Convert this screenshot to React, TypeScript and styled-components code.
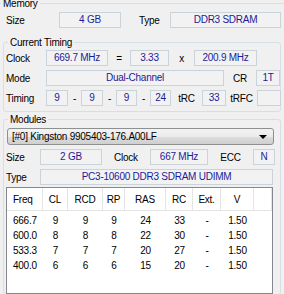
import React from "react";
import styled, { createGlobalStyle } from "styled-components";

const Global = createGlobalStyle`
  html, body { margin: 0; padding: 0; background: #f0f0f0; }
  body {
    font-family: "Liberation Sans", Arial, sans-serif;
    font-size: 10px;
    letter-spacing: -0.25px;
    color: #000;
  }
  * { box-sizing: border-box; }
`;

const Page = styled.div`
  width: 284px;
  height: 294px;
  overflow: hidden;
`;

const Group = styled.fieldset<{ $mt?: number; $ml?: number; $w?: number; $pb?: number }>`
  margin: ${(p) => p.$mt ?? 0}px 0 0 ${(p) => p.$ml ?? 0}px;
  width: ${(p) => (p.$w ? `${p.$w}px` : "auto")};
  padding: 0 0 ${(p) => p.$pb ?? 0}px 0;
  border: 1px solid #d5dfe5;
  border-radius: 3px;
  min-inline-size: 0;
`;

const OuterGroup = styled(Group)`
  margin: -3px -4px 0 -4px;
  height: 320px;
`;

const Legend = styled.legend`
  padding: 0 2px;
  margin-left: 4px;
  line-height: 13px;
  color: #000;
`;

const Row = styled.div<{ $mt?: number; $pl?: number }>`
  display: flex;
  align-items: center;
  height: 16px;
  margin-top: ${(p) => p.$mt ?? 0}px;
  padding-left: ${(p) => p.$pl ?? 0}px;
`;

const Label = styled.span<{ $w: number; $center?: boolean }>`
  flex: none;
  width: ${(p) => p.$w}px;
  text-align: ${(p) => (p.$center ? "center" : "left")};
  white-space: nowrap;
`;

const Field = styled.div<{ $w: number }>`
  flex: none;
  width: ${(p) => p.$w}px;
  height: 16px;
  border: 1px solid #cbd3da;
  background: #f2f2f2;
  color: #1c1c98;
  text-align: center;
  line-height: 14px;
  white-space: nowrap;
  overflow: hidden;
`;

const Combo = styled.div`
  display: flex;
  align-items: center;
  justify-content: space-between;
  margin: 2px 0 0 3px;
  width: 267px;
  height: 17px;
  padding: 0 6px 0 4px;
  border: 1px solid #8e8f8f;
  border-radius: 3px;
  background: linear-gradient(#f3f3f3 0%, #ebebeb 50%, #dddddd 51%, #cfcfcf 100%);
`;

const Arrow = styled.span`
  width: 0;
  height: 0;
  border-left: 4px solid transparent;
  border-right: 4px solid transparent;
  border-top: 4px solid #000;
`;

const Table = styled.div`
  margin: 2px 0 0 2px;
  width: 267px;
  height: 107px;
  background: #fff;
  border: 1px solid #828790;
`;

const Cols = "36px 25px 35px 22px 41px 27px 28px 33px 1fr";

const HeadRow = styled.div`
  display: grid;
  grid-template-columns: ${Cols};
  height: 23px;
  border-bottom: 1px solid #e5e5e5;
`;

const HeadCell = styled.div<{ $left?: boolean }>`
  display: flex;
  align-items: center;
  justify-content: ${(p) => (p.$left ? "flex-start" : "center")};
  padding-left: ${(p) => (p.$left ? "6px" : "0")};
  border-right: 1px solid #e5e5e5;
`;

const Body = styled.div`
  padding-top: 2px;
`;

const DataRow = styled.div`
  display: grid;
  grid-template-columns: ${Cols};
  height: 15px;
  align-items: center;
`;

const Cell = styled.div<{ $left?: boolean }>`
  text-align: ${(p) => (p.$left ? "left" : "center")};
  padding-left: ${(p) => (p.$left ? "6px" : "0")};
`;

const rows = [
  ["666.7", "9", "9", "9", "24", "33", "-", "1.50"],
  ["600.0", "8", "8", "8", "22", "30", "-", "1.50"],
  ["533.3", "7", "7", "7", "20", "27", "-", "1.50"],
  ["400.0", "6", "6", "6", "15", "20", "-", "1.50"],
];

const heads = ["Freq", "CL", "RCD", "RP", "RAS", "RC", "Ext.", "V", ""];

export default function App() {
  return (
    <Page>
      <Global />
      <OuterGroup>
        <Legend>Memory</Legend>
        <Row $mt={2} $pl={9}>
          <Label $w={53}>Size</Label>
          <Field $w={62}>4 GB</Field>
          <Label $w={18} />
          <Label $w={31}>Type</Label>
          <Field $w={111}>DDR3 SDRAM</Field>
        </Row>

        <Group $mt={8} $ml={6} $w={278} $pb={5}>
          <Legend>Current Timing</Legend>
          <Row $mt={1} $pl={2}>
            <Label $w={40}>Clock</Label>
            <Field $w={62}>669.7 MHz</Field>
            <Label $w={22} $center>=</Label>
            <Field $w={39}>3.33</Field>
            <Label $w={25} $center>x</Label>
            <Field $w={63}>200.9 MHz</Field>
          </Row>
          <Row $mt={4} $pl={2}>
            <Label $w={40}>Mode</Label>
            <Field $w={178}>Dual-Channel</Field>
            <Label $w={32} $center>CR</Label>
            <Field $w={24}>1T</Field>
          </Row>
          <Row $mt={4} $pl={2}>
            <Label $w={40}>Timing</Label>
            <Field $w={22}>9</Field>
            <Label $w={13} $center>-</Label>
            <Field $w={22}>9</Field>
            <Label $w={13} $center>-</Label>
            <Field $w={21}>9</Field>
            <Label $w={13} $center>-</Label>
            <Field $w={21}>24</Field>
            <Label $w={31} $center>tRC</Label>
            <Field $w={24}>33</Field>
            <Label $w={31} $center>tRFC</Label>
            <Field $w={24}></Field>
          </Row>
        </Group>

        <Group $mt={1} $ml={6} $w={278}>
          <Legend>Modules</Legend>
          <Combo>
            <span>[#0] Kingston 9905403-176.A00LF</span>
            <Arrow />
          </Combo>
          <Row $mt={4} $pl={2}>
            <Label $w={34}>Size</Label>
            <Field $w={62}>2 GB</Field>
            <Label $w={48} $center>Clock</Label>
            <Field $w={58}>667 MHz</Field>
            <Label $w={45} $center>ECC</Label>
            <Field $w={22}>N</Field>
          </Row>
          <Row $mt={4} $pl={2}>
            <Label $w={34}>Type</Label>
            <Field $w={233}>PC3-10600 DDR3 SDRAM UDIMM</Field>
          </Row>
          <Table>
            <HeadRow>
              {heads.map((h, i) => (
                <HeadCell key={i} $left={i === 0}>{h}</HeadCell>
              ))}
            </HeadRow>
            <Body>
              {rows.map((r, i) => (
                <DataRow key={i}>
                  {r.map((c, j) => (
                    <Cell key={j} $left={j === 0}>{c}</Cell>
                  ))}
                  <Cell />
                </DataRow>
              ))}
            </Body>
          </Table>
        </Group>
      </OuterGroup>
    </Page>
  );
}
